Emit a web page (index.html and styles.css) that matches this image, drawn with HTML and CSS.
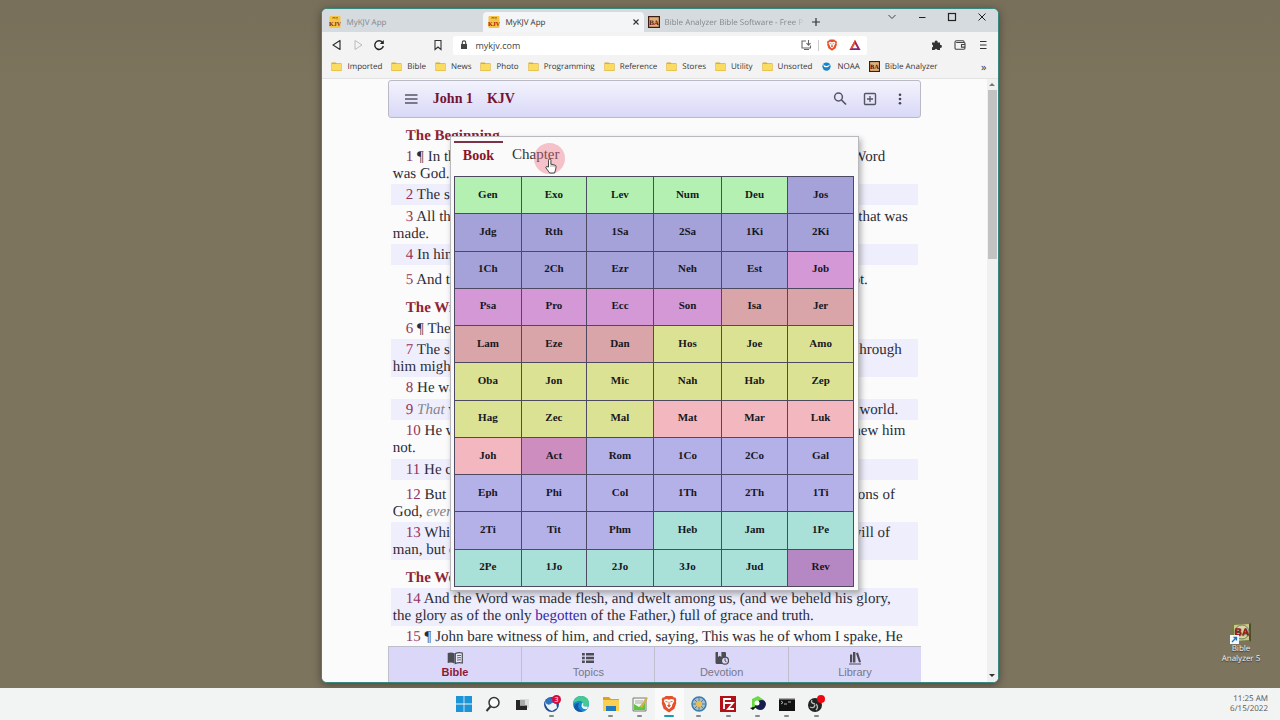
FILE: index.html
```html
<!DOCTYPE html>
<html lang="en">
<head>
<meta charset="utf-8">
<title>MyKJV App</title>
<link rel="stylesheet" href="styles.css">
</head>
<body>
<svg class="defs" aria-hidden="true">
  <symbol id="folder" viewBox="0 0 12 11"><path d="M1 1h4l1.200 1H11a.6.6 0 0 1 .6.6v7.300a.6.6 0 0 1-.6.6H1a.6.6 0 0 1-.6-.6V1.600A.6.6 0 0 1 1 1z" fill="#d9ab3c"/><path d="M.8 2.900h10.400v6.900H.8z" fill="#fbdc62"/></symbol>
  <symbol id="brave" viewBox="0 0 14 16"><path d="M4 .8h6l1.400 1.500 1.300-.1.900 2.100-.5 1.500.4 1.400-1.700 5L7 15.500l-4.800-3.300-1.700-5 .4-1.400-.5-1.500.9-2.100 1.300.1z" fill="#e6502b"/><path d="M3 4l2-.4 2 .7 2-.7 2 .4.600 1.500-1.700 3-.3 1.700L7 12.700l-2.600-2.500-.3-1.700-1.700-3z" fill="#fff"/><path d="M3.900 5.700l1.900.5M10.100 5.700l-1.900.5M7 6v2.500M5.700 9.400L7 8.600l1.300.8L7 10.700z" stroke="#e6502b" fill="#e6502b" stroke-width=".8"/></symbol>
</svg>

<main class="desktop">
  <section class="window">
    <header class="tabstrip">
      <div class="tab"><svg class="fav" viewBox="0 0 12 12"><rect x=".5" width="11" height="12" rx="1" fill="#f6c446"/><path d="M4 3V1l1 1 1-1v2M7 1l1 1 1-1M8 2v1.500" stroke="#7c5a18" stroke-width=".6" fill="none"/><text x="6" y="10" font-size="6" font-weight="bold" font-family="Liberation Serif" text-anchor="middle" fill="#8e1b12">KJV</text></svg><span>MyKJV App</span></div>
      <div class="tab active"><svg class="fav" viewBox="0 0 12 12"><rect x=".5" width="11" height="12" rx="1" fill="#f6c446"/><path d="M4 3V1l1 1 1-1v2M7 1l1 1 1-1M8 2v1.500" stroke="#7c5a18" stroke-width=".6" fill="none"/><text x="6" y="10" font-size="6" font-weight="bold" font-family="Liberation Serif" text-anchor="middle" fill="#8e1b12">KJV</text></svg><span>MyKJV App</span><button class="close" aria-label="Close tab"><svg viewBox="0 0 8 8"><path d="M1.500 1.500l5 5m0-5l-5 5" stroke="#333" stroke-width="1.100"/></svg></button></div>
      <div class="tab last"><svg class="fav" viewBox="0 0 12 12"><rect x=".6" y=".6" width="10.800" height="10.800" fill="#dfb07c" stroke="#3e1d12" stroke-width="1.200"/><text x="6" y="8.500" font-size="7" font-weight="bold" font-family="Liberation Serif" text-anchor="middle" fill="#4c120d">BA</text></svg><span>Bible Analyzer Bible Software - Free P</span></div>
      <button class="newtab" aria-label="New tab"><svg viewBox="0 0 10 10"><path d="M5 1v8M1 5h8" stroke="#333" stroke-width="1.200"/></svg></button>
      <div class="controls">
        <button aria-label="Search tabs"><svg viewBox="0 0 10 10"><path d="M1.500 3L5 6.500 8.500 3" fill="none" stroke="#444"/></svg></button>
        <button aria-label="Minimize"><svg viewBox="0 0 10 10"><path d="M2 5.500h6.500" stroke="#222"/></svg></button>
        <button aria-label="Maximize"><svg viewBox="0 0 10 10"><rect x="1.500" y="1.500" width="7" height="7" fill="none" stroke="#222" stroke-width="1.200"/></svg></button>
        <button aria-label="Close"><svg viewBox="0 0 10 10"><path d="M1.500 1.500l7 7m0-7l-7 7" stroke="#222"/></svg></button>
      </div>
    </header>

    <div class="toolbar">
      <div class="nav">
        <button aria-label="Back"><svg viewBox="0 0 12 12"><path d="M9 1.500v9L2 6z" fill="none" stroke="#333" stroke-width="1.200" stroke-linejoin="round"/></svg></button>
        <button aria-label="Forward"><svg viewBox="0 0 12 12"><path d="M3 1.500v9L10 6z" fill="none" stroke="#bbb" stroke-linejoin="round"/></svg></button>
        <button aria-label="Reload"><svg viewBox="0 0 12 12"><path d="M9.500 3.500A4.300 4.300 0 1 0 10.300 7" fill="none" stroke="#222" stroke-width="1.400"/><path d="M10.800 1v4H6.900z" fill="#222"/></svg></button>
      </div>
      <button class="mark" aria-label="Bookmark this page"><svg viewBox="0 0 12 12"><path d="M3 1.500h6v9L6 8l-3 2.500z" fill="none" stroke="#333" stroke-width="1.100"/></svg></button>
      <div class="address">
        <svg class="lock" viewBox="0 0 8 10"><path d="M1 4h6v5H1z" fill="#444"/><path d="M2.300 4V2.600a1.700 1.700 0 0 1 3.400 0V4" fill="none" stroke="#444" stroke-width="1.100"/></svg>
        <input type="text" value="mykjv.com" aria-label="Address">
        <svg viewBox="0 0 12 12"><path d="M6 2H2v7h8.500V6.500M4 10.500h5M8.500 1v5M6.500 4.200l2 2 2-2" fill="none" stroke="#666" stroke-width="1.100"/></svg>
        <i class="sep"></i>
        <svg viewBox="0 0 14 16"><use href="#brave"/></svg>
        <svg class="bat" viewBox="0 0 12 12"><path d="M6 .8L.5 11h11z" fill="#9e1f63"/><path d="M6 .8L.5 11l3-1.600L6 5z" fill="#f0502c"/><path d="M.5 11h11L8.800 9.300H3.500z" fill="#652d8d"/><path d="M6 5L3.600 9.200h4.800z" fill="#fff"/></svg>
      </div>
      <div class="extras">
        <button aria-label="Extensions"><svg viewBox="0 0 12 12"><path d="M1 3.500h2.700a1.500 1.500 0 1 1 2.900 0H9v2.400a1.500 1.500 0 1 1 0 2.900V11H6.500a1.500 1.500 0 0 0-2.900 0H1V8.500a1.500 1.500 0 0 0 0-2.900z" fill="#333"/></svg></button>
        <button aria-label="Wallet"><svg viewBox="0 0 12 12"><path d="M10 3.500V2.800a1 1 0 0 0-1-1H2.500a1.500 1.500 0 0 0-1.500 1.500V9a1.200 1.200 0 0 0 1.200 1.200h7.600A1.200 1.200 0 0 0 11 9V4.500a1 1 0 0 0-1-1H2.200M11 5.500H7.500v2.600H11" fill="none" stroke="#444" stroke-width="1.100"/></svg></button>
        <button aria-label="Menu"><svg viewBox="0 0 12 12"><path d="M3 2.500h6.500M3 6h6.500M3 9.500h6.500" stroke="#333" stroke-width="1.200"/></svg></button>
      </div>
    </div>

    <nav class="bookmarks">
      <a href="#"><svg><use href="#folder"/></svg>Imported</a>
      <a href="#"><svg><use href="#folder"/></svg>Bible</a>
      <a href="#"><svg><use href="#folder"/></svg>News</a>
      <a href="#"><svg><use href="#folder"/></svg>Photo</a>
      <a href="#"><svg><use href="#folder"/></svg>Programming</a>
      <a href="#"><svg><use href="#folder"/></svg>Reference</a>
      <a href="#"><svg><use href="#folder"/></svg>Stores</a>
      <a href="#"><svg><use href="#folder"/></svg>Utility</a>
      <a href="#"><svg><use href="#folder"/></svg>Unsorted</a>
      <a href="#"><svg viewBox="0 0 12 12"><circle cx="6" cy="6" r="4.500" fill="#1683cb"/><path d="M2 3Q5.500 7.500 10 3.500 8.500 8 3.500 6.500z" fill="#fff"/></svg>NOAA</a>
      <a href="#"><svg viewBox="0 0 12 12"><rect x=".6" y=".6" width="10.800" height="10.800" fill="#dfb07c" stroke="#3e1d12" stroke-width="1.200"/><text x="6" y="8.500" font-size="7" font-weight="bold" font-family="Liberation Serif" text-anchor="middle" fill="#4c120d">BA</text></svg>Bible Analyzer</a>
      <button class="more" aria-label="More bookmarks">»</button>
    </nav>

    <div class="page">
      <div class="app">
        <header class="appbar">
          <button aria-label="Menu"><svg viewBox="0 0 16 16"><path d="M2 4h12.500M2 8h12.500M2 12h12.500" stroke="#555566" stroke-width="1.300"/></svg></button>
          <button class="ref">John 1</button>
          <button class="ref">KJV</button>
          <span class="spacer"></span>
          <button aria-label="Search"><svg viewBox="0 0 16 16"><circle cx="6.500" cy="6" r="3.900" fill="none" stroke="#555566" stroke-width="1.500"/><path d="M9.500 9l4.500 4.500" stroke="#555566" stroke-width="1.700"/></svg></button>
          <button aria-label="Add"><svg viewBox="0 0 16 16"><rect x="2.500" y="2.500" width="11" height="11" rx="1" fill="none" stroke="#555566" stroke-width="1.400"/><path d="M8 5v6M5 8h6" stroke="#555566" stroke-width="1.300"/></svg></button>
          <button aria-label="More"><svg viewBox="0 0 16 16" fill="#444455"><circle cx="8" cy="3.700" r="1.300"/><circle cx="8" cy="8" r="1.300"/><circle cx="8" cy="12.300" r="1.300"/></svg></button>
        </header>

        <article class="text">
          <h2>The Beginning</h2>
          <p><b>1</b> ¶ In the beginning was the Word,&emsp;and the Word was with God, and the Word<br>was God.</p>
          <p class="alt"><b>2</b> The same was in the beginning with God.</p>
          <p class="gap"><b>3</b> All things were made by him;&emsp;and without him was not any thing made that was<br>made.</p>
          <p class="alt"><b>4</b> In him was life; and the life was the light of men.</p>
          <p class="para"><b>5</b> And the light shineth in darkness;&emsp;&nbsp;and the darkness comprehended it not.</p>
          <h2>The Witness</h2>
          <p><b>6</b> ¶ There was a man sent from God, whose name <em>was</em> John.</p>
          <p class="alt"><b>7</b> The same came for a witness,&emsp;to bear witness of the Light, that all <em>men</em> through<br>him might believe.</p>
          <p><b>8</b> He was not that Light, but <em>was sent</em> to bear witness of that Light.</p>
          <p class="alt gap"><b>9</b> <em>That</em> was the true Light,&emsp;&nbsp;which lighteth every man that cometh into the world.</p>
          <p><b>10</b> He was in the world,&ensp;&nbsp;and the world was made by him, and the world knew him<br>not.</p>
          <p class="alt gap"><b>11</b> He came unto his own, and his own received him not.</p>
          <p class="para"><b>12</b> But as many as received him,&emsp;&ensp;to them gave he power to become the sons of<br>God, <em>even</em> to them that believe on his name:</p>
          <p class="alt"><b>13</b> Which were born, not of blood,&ensp;&nbsp;nor of the will of the flesh, nor of the will of<br>man, but of God.</p>
          <h2>The Word Made Flesh</h2>
          <p class="alt"><b>14</b> And the Word was made flesh, and dwelt among us, (and we beheld his glory,<br>the glory as of the only <a href="#">begotten</a> of the Father,) full of grace and truth.</p>
          <p><b>15</b> ¶ John bare witness of him, and cried, saying, This was he of whom I spake, He</p>
        </article>

        <nav class="bottom">
          <button class="on"><svg viewBox="0 0 16 14"><path d="M.7 2Q4.500.8 7.600 2.500v10Q4.500 11 .7 12z" fill="#4c4c55"/><path d="M8.300 2.500Q11.500 1 15.300 2v10q-3.800-1-7 .5z" fill="#ececff" stroke="#4c4c55" stroke-width="1.200"/><path d="M10 4.800q2-.6 4-.3M10 7q2-.6 4-.3M10 9.200q2-.6 4-.3" fill="none" stroke="#4c4c55" stroke-width=".9"/></svg>Bible</button>
          <button><svg viewBox="0 0 16 14"><path d="M2 2h2.800v2.600H2zM6 2h8v2.600H6zM2 5.700h2.800v2.600H2zM6 5.700h8v2.600H6zM2 9.400h2.800V12H2zM6 9.400h8V12H6z" fill="#4c4c55"/></svg>Topics</button>
          <button><svg viewBox="0 0 16 14"><path d="M2 1h2v5l1.700-1.200L7.400 6V1H11a1 1 0 0 1 1 1v11H3a1.500 1.500 0 0 1-1.500-1.500V1.500z" fill="#4c4c55"/><circle cx="11" cy="9.700" r="3.500" fill="#dcdaf8" stroke="#4c4c55" stroke-width="1.200"/><path d="M11 7.500v2.400l1.600 1" fill="none" stroke="#4c4c55"/></svg>Devotion</button>
          <button><svg viewBox="0 0 16 14"><path d="M2 12.500h12v1H2zM3 3.500h2.200v8H3zM6 1h2.400v10.500H6zM9 2.200l2-.6 3 9.300-2 .7z" fill="#4c4c55"/></svg>Library</button>
        </nav>

        <section class="popup">
          <div class="switch"><button class="on">Book</button><button>Chapter</button></div>
          <div class="books">
            <button class="law">Gen</button><button class="law">Exo</button><button class="law">Lev</button><button class="law">Num</button><button class="law">Deu</button><button class="his">Jos</button>
            <button class="his">Jdg</button><button class="his">Rth</button><button class="his">1Sa</button><button class="his">2Sa</button><button class="his">1Ki</button><button class="his">2Ki</button>
            <button class="his">1Ch</button><button class="his">2Ch</button><button class="his">Ezr</button><button class="his">Neh</button><button class="his">Est</button><button class="poe">Job</button>
            <button class="poe">Psa</button><button class="poe">Pro</button><button class="poe">Ecc</button><button class="poe">Son</button><button class="maj">Isa</button><button class="maj">Jer</button>
            <button class="maj">Lam</button><button class="maj">Eze</button><button class="maj">Dan</button><button class="min">Hos</button><button class="min">Joe</button><button class="min">Amo</button>
            <button class="min">Oba</button><button class="min">Jon</button><button class="min">Mic</button><button class="min">Nah</button><button class="min">Hab</button><button class="min">Zep</button>
            <button class="min">Hag</button><button class="min">Zec</button><button class="min">Mal</button><button class="gos">Mat</button><button class="gos">Mar</button><button class="gos">Luk</button>
            <button class="gos">Joh</button><button class="act">Act</button><button class="pau">Rom</button><button class="pau">1Co</button><button class="pau">2Co</button><button class="pau">Gal</button>
            <button class="pau">Eph</button><button class="pau">Phi</button><button class="pau">Col</button><button class="pau">1Th</button><button class="pau">2Th</button><button class="pau">1Ti</button>
            <button class="pau">2Ti</button><button class="pau">Tit</button><button class="pau">Phm</button><button class="gen">Heb</button><button class="gen">Jam</button><button class="gen">1Pe</button>
            <button class="gen">2Pe</button><button class="gen">1Jo</button><button class="gen">2Jo</button><button class="gen">3Jo</button><button class="gen">Jud</button><button class="rev">Rev</button>
          </div>
          <div class="pointer"><svg viewBox="0 0 12 16"><path d="M3.500 9V2.200a1.200 1.200 0 0 1 2.400 0v4l4 .9q1.300.4 1.200 1.700L10.500 12l-1 3H4.700L1 10q-.5-1.200.6-1.500z" fill="#fff" stroke="#333" stroke-width=".9"/><path d="M6 6v3M8 6.500V9M9.800 7.200v2" stroke="#777" stroke-width=".6"/></svg></div>
        </section>
      </div>
      <div class="scrollbar"><i class="up"></i><i class="thumb"></i><i class="down"></i></div>
    </div>
  </section>

  <a class="shortcut" href="#">
    <svg viewBox="0 0 22 22"><path d="M2 1h19v19H4l-2-2z" fill="#777a48"/><path d="M4 3l15-1v16L4 19z" fill="#c9c98c"/><path d="M19 2l2-1v19l-2-2z" fill="#4c4f2c"/><circle cx="12" cy="10" r="7" fill="#d9d5a6" stroke="#738457"/><text x="12" y="13" font-size="10" font-weight="bold" font-family="Liberation Sans" text-anchor="middle" fill="#9b2018">BA</text><rect y="13" width="9" height="9" fill="#f4f8fc"/><path d="M2 20l4-4M3.500 15.500h3v3" fill="none" stroke="#1c73c0" stroke-width="1.300"/></svg>
    <span>Bible<br>Analyzer 5</span>
  </a>
</main>

<footer class="taskbar">
  <div class="tasks">
    <button aria-label="Start"><svg viewBox="0 0 18 18"><path d="M1 1h7.600v7.600H1zM9.400 1H17v7.600H9.400zM1 9.400h7.600V17H1zM9.400 9.400H17V17H9.400z" fill="#1b94d8"/></svg></button>
    <button aria-label="Search"><svg viewBox="0 0 18 18"><circle cx="10" cy="7.500" r="5" fill="#fafafa" stroke="#333" stroke-width="1.500"/><path d="M6.500 11.500L2.500 16" stroke="#333" stroke-width="2"/></svg></button>
    <button aria-label="Task view"><svg viewBox="0 0 18 18"><path d="M7 4h9v9H7z" fill="#dcdcdc"/><path d="M3 5h4v5.500h7V15H3z" fill="#262626"/><path d="M7 5h5v5.500H7z" fill="#aaa"/></svg></button>
    <button class="run" aria-label="Mail"><svg viewBox="0 0 18 18"><circle cx="8.500" cy="9.500" r="7.500" fill="#204f91"/><path d="M2 7q5-4 11 0l1 6-5 3q-6-2-7-9z" fill="#eef3f8"/><path d="M2 7q3 5 7 1l4-1-1-3-7-1z" fill="#2b75c2"/><circle cx="13.500" cy="4.500" r="4.500" fill="#d60c3e"/><text x="13.500" y="7" font-size="7" font-family="Open Sans" text-anchor="middle" fill="#fff">3</text></svg></button>
    <button aria-label="Edge"><svg viewBox="0 0 18 18"><circle cx="9" cy="9" r="8" fill="#1688cf"/><path d="M1 9Q2 1 9.500 1 17 1.500 17 8.500q-.5 3.500-5 3.200-2-.6-1-2.700-1-4-5-3Q2 7 1 9z" fill="#45cb91"/><path d="M7 8q-3 6 4 8.500Q4 18 2 12 3 8 7 8z" fill="#1557a4"/><path d="M10 8q2 0 1 2 0 2 5 1.500L15 14q-7 1-5-6z" fill="#e8f6f8"/></svg></button>
    <button class="run" aria-label="Files"><svg viewBox="0 0 18 18"><path d="M1 2h6l2 2h8v12H1z" fill="#dfa21e"/><path d="M1 5h16v11H1z" fill="#fbd052"/><path d="M4 11h10v5H4z" fill="#2279bc"/></svg></button>
    <button class="run" aria-label="Notepad++"><svg viewBox="0 0 18 18"><path d="M2 3h13v13H2z" fill="#f3f6f0" stroke="#767b74"/><path d="M4 6h8M4 8h8" stroke="#aaa"/><path d="M3 9l5 3 6-6v9H3z" fill="#5cc63c"/><path d="M9 12l6-10 2 1-6 10z" fill="#d4b24b"/></svg></button>
    <button class="run current" aria-label="Brave"><svg viewBox="0 0 14 16"><use href="#brave"/></svg></button>
    <button class="run" aria-label="Bible app"><svg viewBox="0 0 18 18"><circle cx="9" cy="9" r="7" fill="#a9bfc8" stroke="#397daf" stroke-width="1.500"/><path d="M9 2v14M2 9h14M4 4l10 10M14 4L4 14" stroke="#537e9b"/><circle cx="9" cy="9" r="3" fill="#edbd50"/></svg></button>
    <button class="run" aria-label="FileZilla"><svg viewBox="0 0 18 18"><path d="M1 1h16v16H1z" fill="#b11116"/><path d="M5 14V4h7M5 8h5M9 8h5l-5 6h6" fill="none" stroke="#fff" stroke-width="1.800"/></svg></button>
    <button class="run" aria-label="Bird app"><svg viewBox="0 0 18 18"><path d="M3 4l6-3 6 4-5 5-7 5z" fill="#66dc42"/><path d="M9 6q7-3 8 3-1 6-6 6-5-1-5-4z" fill="#171c4b"/><circle cx="8" cy="8" r="2.500" fill="#fff"/><path d="M1 13l7-2-4 4z" fill="#111"/></svg></button>
    <button class="run" aria-label="Terminal"><svg viewBox="0 0 18 18"><path d="M1 3h16v13H1z" fill="#111"/><path d="M1 3h16v1.500H1z" fill="#aaa"/><path d="M3 6l2 1.500L3 9M6 9h3M10 7h3" fill="none" stroke="#ddd" stroke-width=".8"/></svg></button>
    <button class="run" aria-label="OBS"><svg viewBox="0 0 18 18"><circle cx="8" cy="10" r="7" fill="#222"/><path d="M8 9q-5-1-3-4M9 9q3 3 0 6M8 10q-1 4-5 2" fill="none" stroke="#bbb" stroke-width="1.300"/><circle cx="14" cy="4" r="4" fill="#f00810"/></svg></button>
  </div>
  <div class="clock">11:25 AM<br>6/15/2022</div>
</footer>
</body>
</html>
```
FILE: styles.css
```css
* { box-sizing: border-box; }
body {
  margin: 0;
  min-height: 100vh;
  display: flex;
  flex-direction: column;
  font-family: "Open Sans", "Noto Sans", sans-serif;
  font-size: 8px;
  color: #333;
  text-rendering: geometricPrecision;
}
button {
  font: inherit;
  color: inherit;
  border: 0;
  background: none;
  padding: 0;
  margin: 0;
}
svg { display: block; }
a { color: inherit; text-decoration: none; }
.defs { position: absolute; width: 0; height: 0; }

.desktop {
  flex: 1;
  display: flex;
  justify-content: center;
  padding: 8px 0 5px 40px;
  background: linear-gradient(#776f59, #7d745e 12%);
  position: relative;
}
.window {
  width: 54.6%;
  min-width: 677px;
  height: calc(100vh - 45px);
  display: flex;
  flex-direction: column;
  overflow: hidden;
  border: 1px solid #37877d;
  border-radius: 6px;
  background: #f3f3f3;
  box-shadow: 0 2px 8px rgba(0, 0, 0, .4);
}

.tabstrip { display: flex; height: 23px; background: #d5dbdf; flex: none; align-items: flex-end; }
.tab {
  display: flex;
  align-items: center;
  gap: 5px;
  flex: 0 0 161px;
  min-width: 0;
  height: 20px;
  padding: 0 4px 0 7px;
  color: #85898c;
  white-space: nowrap;
}
.tab span { overflow: hidden; flex: 1; min-width: 0; }
.tab.active { background: #f4f5f6; color: #333; border-radius: 4px 4px 0 0; padding-left: 5px; }
.tab.last { padding-left: 4px; padding-right: 0; gap: 4px; }
.tab.last span { mask-image: linear-gradient(90deg, #000 92%, transparent); }
.fav { width: 12px; height: 12px; flex: none; }
.close svg { width: 8px; height: 8px; }
.newtab { padding: 5px 6px; }
.newtab svg, .controls svg { width: 10px; height: 10px; }
.controls { display: flex; gap: 20px; margin-left: auto; padding: 0 11px 10px; }

.toolbar { display: flex; align-items: center; height: 26px; flex: none; padding: 0 9px; }
.toolbar svg { width: 12px; height: 12px; flex: none; }
.nav { display: flex; gap: 9px; }
.mark { margin: 0 9px 0 47px; }
.address { flex: 1; display: flex; align-items: center; height: 19px; background: #fff; padding: 0 6px 0 7px; border-radius: 2px; }
.address input { flex: 1; min-width: 0; border: 0; padding: 0; margin-left: 7px; background: none; font: inherit; font-size: 9px; color: #444; }
.address .lock { width: 8px; height: 10px; }
.sep { width: 1px; height: 11px; background: #ccc; margin: 0 7px 0 6px; }
.bat { margin-left: 11px; }
.extras { display: flex; gap: 11px; margin-left: 64px; }

.bookmarks { display: flex; align-items: center; gap: 9px; height: 21px; flex: none; padding: 0 11px 4px 9px; border-bottom: 1px solid #e3e3e3; }
.bookmarks a { display: flex; align-items: center; gap: 5px; white-space: nowrap; }
.bookmarks svg { width: 11px; height: 11px; }
.more { margin-left: auto; font-size: 11px; }

.page { flex: 1; min-height: 0; display: flex; background: #fbfbfc; }
.app { width: 79%; min-width: 0; margin: 1px auto 0; display: flex; flex-direction: column; position: relative; font-family: "Liberation Serif", serif; }
.appbar {
  display: flex;
  align-items: center;
  height: 38px;
  flex: none;
  padding: 0 12px 0 14px;
  border: 1px solid #babac6;
  border-radius: 3px;
  background: linear-gradient(#f3f3fd, #d9d8f7);
}
.appbar svg { width: 16px; height: 16px; }
.appbar button { margin-right: 14px; }
.appbar button:last-child { margin-right: 0; }
.appbar .ref { font-size: 14px; font-weight: bold; color: #741332; }
.spacer { flex: 1; }

.text { flex: 1; min-height: 0; overflow: hidden; padding: 7px 3px 0; }
.text h2, .text p { margin: 0; padding: 3px 2px 1px; font-size: 15px; line-height: 17px; text-indent: 13px; color: #2c2c35; white-space: nowrap; }
.text h2 { color: #8d2334; }
.text p + h2 { margin-top: 7px; }
.text b { font-weight: normal; color: #93345a; }
.text em { color: #84848c; }
.text a { color: #3527a8; }
.text .alt { background: #eeeefc; }
.text .gap { margin-top: 1px; }
.text .para { margin-top: 4px; }

.bottom { display: grid; grid-template-columns: repeat(4, 1fr); flex: none; height: 36px; background: #dad7f8; border-top: 1px solid #bdbdcb; font-family: "Liberation Sans", sans-serif; font-size: 11px; color: #77778a; }
.bottom button { display: flex; flex-direction: column; align-items: center; justify-content: center; gap: 1px; border-left: 1px solid #bfbfcd; }
.bottom svg { width: 16px; height: 14px; }
.bottom .on { color: #8e1737; font-weight: bold; }

.popup { position: absolute; left: 62px; right: 62px; top: 56px; padding: 4px 4px 3px 3px; background: #fafafa; border: 1px solid #b9b9bd; box-shadow: 2px 3px 6px rgba(0, 0, 0, .3); }
.switch { display: flex; height: 35px; align-items: flex-start; font-size: 15px; }
.switch button { padding: 3px 9px; line-height: 20px; }
.switch .on { color: #8b1326; font-size: 14px; font-weight: bold; border-top: 2px solid #7b3148; }
.books { display: grid; grid-template-columns: 66fr 64fr 66fr 67fr 65fr 65fr; grid-auto-rows: 1fr; gap: 1px; height: 411px; padding: 1px; background: #4c4960; font-size: 11px; font-weight: bold; color: #17171d; }
.books button { padding-bottom: 3px; }
.law { background: #b4f0b1; }
.his { background: #a5a1d9; }
.poe { background: #d598d7; }
.maj { background: #d9a5a9; }
.min { background: #dce293; }
.gos { background: #f3b8bf; }
.act { background: #cd8ebf; }
.pau { background: #b4b0e8; }
.gen { background: #a9e1d8; }
.rev { background: #b588c4; }
.pointer { position: absolute; left: 83px; top: 6px; width: 31px; height: 31px; border-radius: 50%; background: rgba(238, 110, 130, .4); }
.pointer svg { width: 12px; height: 16px; margin: 15px 0 0 11px; }

.scrollbar { width: 11px; flex: none; background: #f0f0f1; display: flex; flex-direction: column; align-items: center; }
.up, .down { border: 3px solid transparent; }
.up { border-bottom-color: #777; border-top: 0; margin: 4px 0; }
.down { border-top-color: #333; border-bottom: 0; margin: auto 0 5px; }
.thumb { width: 9px; height: 28%; background: #c2c2c3; }

.shortcut { position: absolute; right: 14px; bottom: 24px; width: 50px; display: flex; flex-direction: column; align-items: center; text-align: center; color: #f4f2ec; line-height: 10px; text-shadow: 0 1px 1px #333; }
.shortcut svg { width: 22px; height: 22px; }

.taskbar { display: flex; justify-content: center; align-items: center; height: 32px; flex: none; background: #f2f3f3; position: relative; }
.tasks { display: grid; grid-template-columns: repeat(13, 1fr); width: 382px; height: 32px; }
.tasks button { display: flex; flex-direction: column; align-items: center; padding-top: 7px; }
.tasks svg { width: 18px; height: 18px; }
.run::after { content: ""; width: 5px; height: 2px; border-radius: 1px; background: #888; margin-top: 2px; }
.current { background: #fafafa; }
.current::after { width: 10px; background: #1b9cae; }
.clock { position: absolute; right: 12px; top: 6px; text-align: right; line-height: 10px; color: #555; }
```
